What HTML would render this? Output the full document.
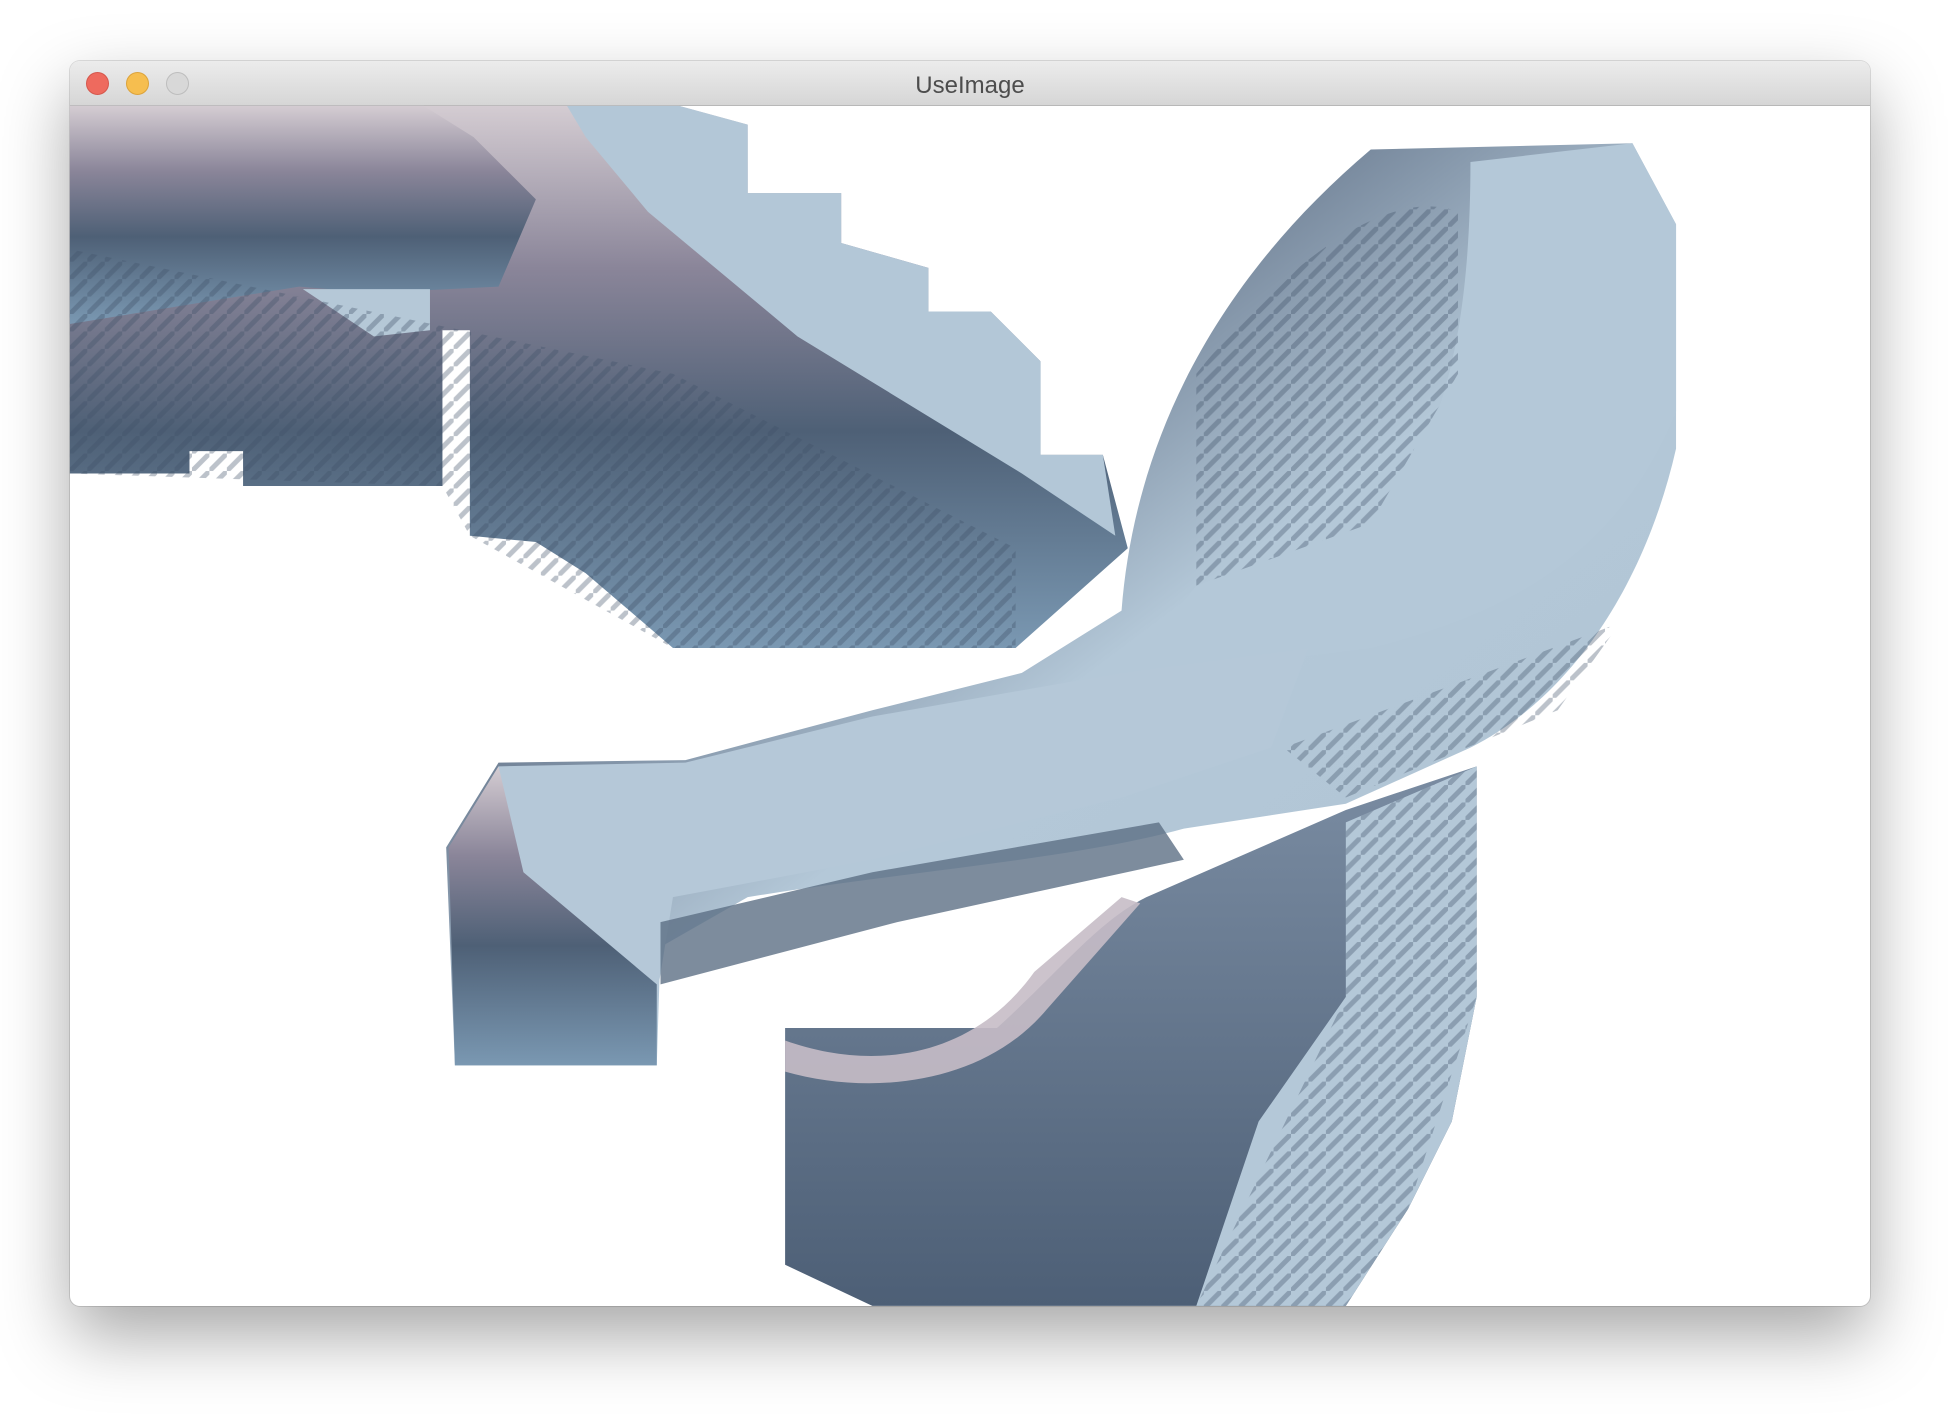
<!DOCTYPE html>
<html><head><meta charset="utf-8"><style>
html,body{margin:0;padding:0;width:1954px;height:1428px;background:#fff;overflow:hidden;font-family:"Liberation Sans",sans-serif}
.win{position:absolute;left:70px;top:61px;width:1800px;height:1245px;border-radius:10px;background:#fff;box-shadow:0 30px 70px rgba(0,0,0,.35),0 0 0 1px rgba(0,0,0,.12);overflow:hidden}
.tb{position:absolute;left:0;top:0;width:100%;height:44px;background:linear-gradient(#ececec,#d6d6d6);border-bottom:1px solid #b8b8b8;text-align:center;line-height:50px;font-size:24px;color:#4d4d4d}
.l{position:absolute;top:11px;width:23px;height:23px;border-radius:50%}
svg{position:absolute;left:0;top:0}
</style></head><body>
<div class="win"><div class="tb">UseImage</div>
<div class="l" style="left:16px;background:#ee6a5e;border:1px solid #d5574c;box-sizing:border-box"></div>
<div class="l" style="left:56px;background:#f6be4f;border:1px solid #dca33b;box-sizing:border-box"></div>
<div class="l" style="left:96px;background:#d8d8d8;border:1px solid #bdbdbd;box-sizing:border-box"></div>
</div>
<svg width="1954" height="1428" viewBox="0 0 1568 1146">
<defs>
<linearGradient id="m" x1="0" y1="0" x2="0" y2="1">
<stop offset="0" stop-color="#d4ccd2"/><stop offset=".3" stop-color="#8a8599"/><stop offset=".6" stop-color="#4e6076"/><stop offset="1" stop-color="#7a98b2"/></linearGradient>
<linearGradient id="b" x1="0" y1="0" x2="1" y2="1">
<stop offset="0" stop-color="#c3bcc6"/><stop offset=".3" stop-color="#5f6f85"/><stop offset=".55" stop-color="#b4c8d8"/><stop offset="1" stop-color="#b0c4d4"/></linearGradient>
<linearGradient id="s" x1="0" y1="0" x2="0" y2="1">
<stop offset="0" stop-color="#7a8ca2"/><stop offset="1" stop-color="#4d5f76"/></linearGradient>
<pattern id="st" width="14" height="14" patternUnits="userSpaceOnUse"><path d="M0 14L14 0" stroke="#3e4f66" stroke-width="4" opacity=".35"/></pattern>
</defs>
<polygon fill="url(#m)" points="56,85 545,85 600,100 600,155 675,155 675,195 745,215 745,250 795,250 835,290 835,365 885,365 905,440 815,520 540,520 470,460 430,435 377,430 377,265 355,265 355,390 195,390 195,362 152,362 152,380 56,380"/>
<polygon fill="#b3c7d7" points="455,85 545,85 600,100 600,155 675,155 675,195 745,215 745,250 795,250 835,290 835,365 885,365 895,430 820,380 640,270 520,170 470,110"/>
<polygon fill="url(#m)" points="56,85 340,85 380,110 430,160 400,230 300,235 240,230 56,260"/>
<polygon fill="#b5c8d7" points="243,232 345,232 345,265 300,270"/>
<polygon fill="url(#st)" points="56,200 540,300 815,440 815,520 540,520 377,430 355,390 56,380"/>
<path fill="url(#b)" d="M900,490 C910,360 970,230 1100,120 L1310,115 L1345,180 L1345,360 C1320,470 1260,560 1180,600 L1080,645 L950,665 C860,690 720,700 600,720 L530,760 L527,855 L365,855 L358,680 L400,612 L550,610 L700,570 L820,540 Z"/>
<path fill="#b4c8d8" d="M1180,130 L1310,115 L1345,180 L1345,330 C1300,440 1220,490 1100,520 L900,545 L960,470 L1100,420 C1160,360 1180,260 1180,130 Z"/>
<path fill="#b5c8d8" d="M400,615 L550,612 L700,575 L900,540 L1050,520 L1020,600 L900,640 L700,690 L540,720 L527,800 L480,760 L400,700 Z"/>
<path fill="url(#st)" d="M960,300 C1040,200 1120,150 1170,170 L1170,300 L1100,420 L960,470 Z"/>
<path fill="url(#st)" d="M1030,600 L1300,500 L1250,570 L1080,640 Z"/>
<path fill="#5d6f85" d="M530,740 L700,700 L930,660 L950,690 L720,740 L530,790 Z" opacity=".8"/>
<path fill="url(#s)" d="M630,825 L800,825 C850,780 880,740 920,720 L1080,650 L1185,615 L1185,800 L1165,900 L1130,970 L1080,1048 L700,1048 L630,1015 Z"/>
<path fill="#b4c8d8" d="M1080,660 L1185,615 L1185,800 L1165,900 L1130,970 L1080,1048 L960,1048 L1010,900 L1080,800 Z"/>
<path fill="url(#st)" d="M1080,660 L1185,615 L1185,800 L1130,970 L1080,1048 L960,1048 L1080,800 Z"/>
<path fill="#c6bcc6" d="M630,835 C700,860 780,850 830,780 L900,720 L915,725 L840,810 C790,870 700,880 630,860 Z" opacity=".9"/>
<path fill="url(#m)" d="M360,680 L400,615 L420,700 L527,790 L527,855 L365,855 Z"/>
</svg>
</body></html>
